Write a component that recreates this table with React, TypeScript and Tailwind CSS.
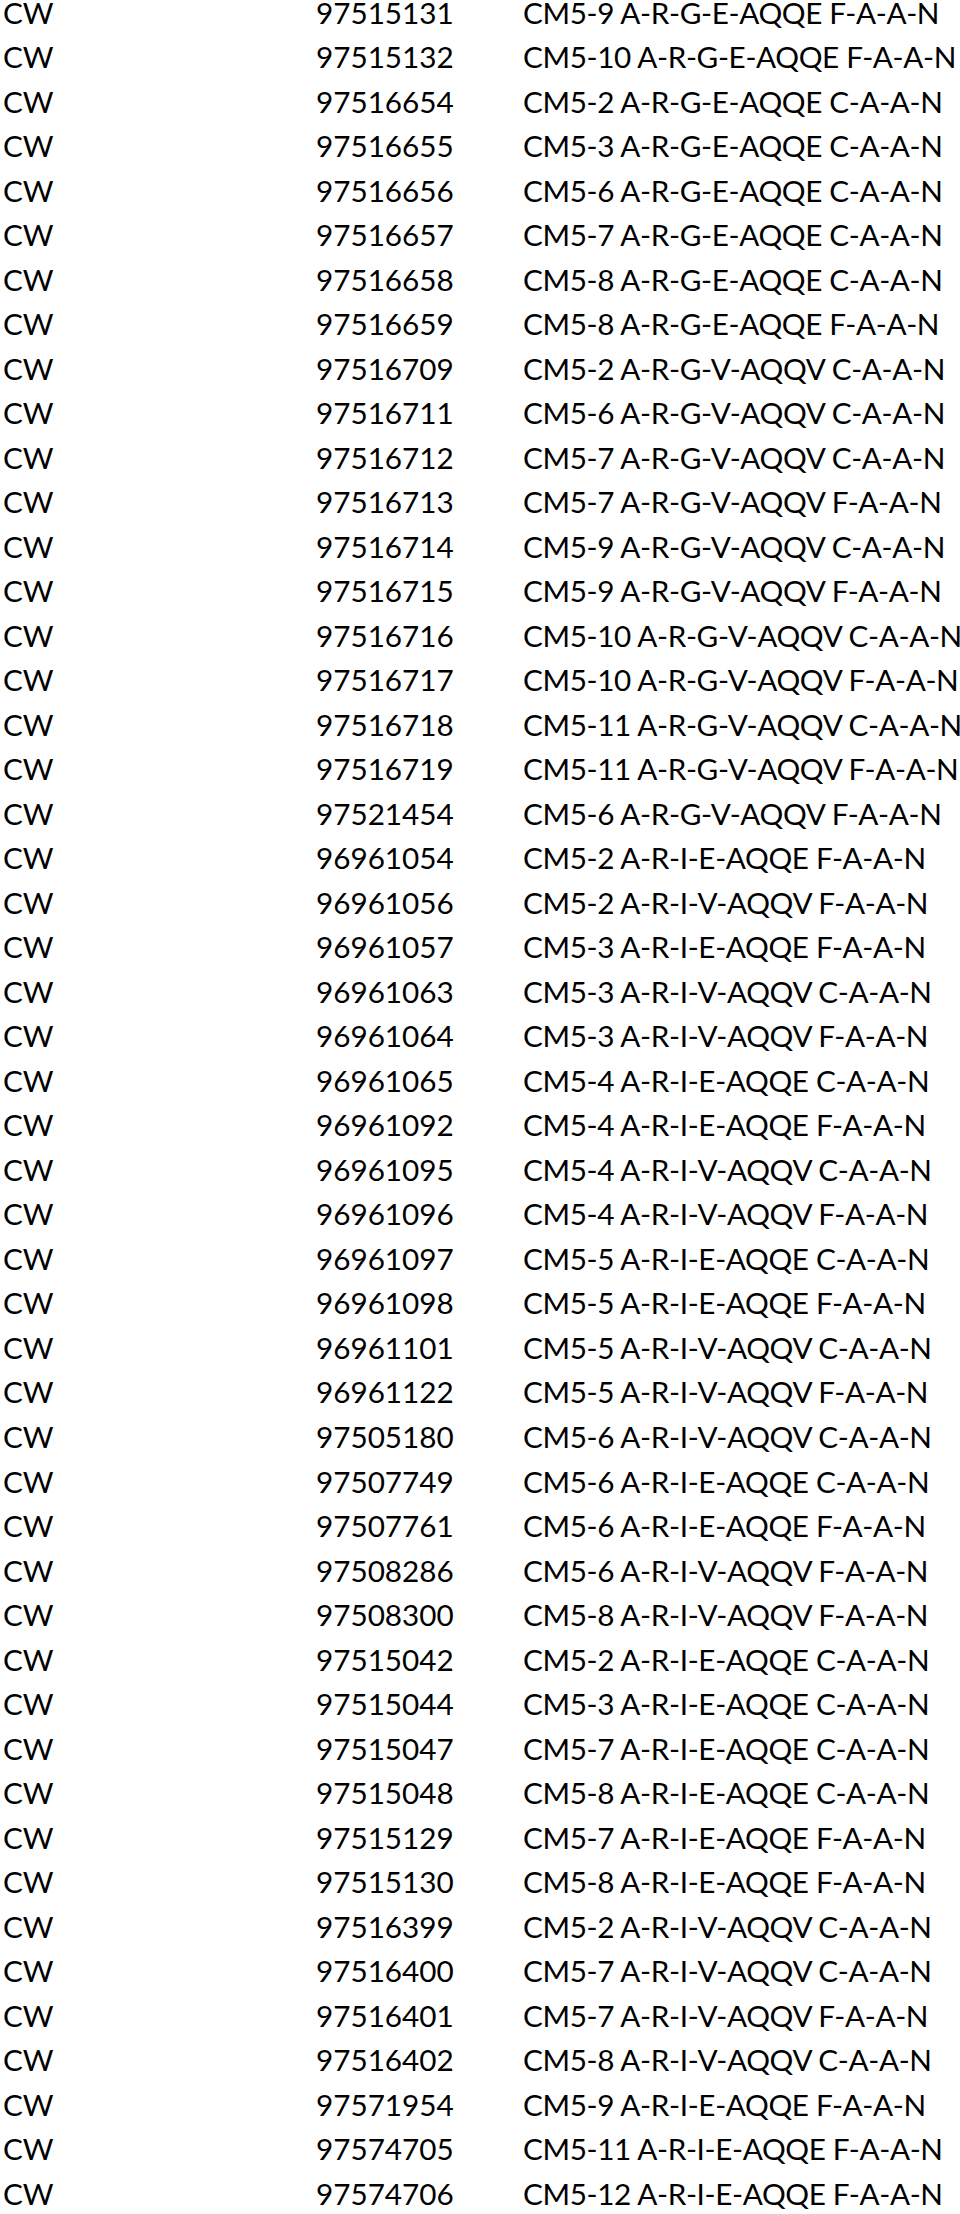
import React from "react";

const rows: [string, string][] = [
  ["97515131", "CM5-9 A-R-G-E-AQQE F-A-A-N"],
  ["97515132", "CM5-10 A-R-G-E-AQQE F-A-A-N"],
  ["97516654", "CM5-2 A-R-G-E-AQQE C-A-A-N"],
  ["97516655", "CM5-3 A-R-G-E-AQQE C-A-A-N"],
  ["97516656", "CM5-6 A-R-G-E-AQQE C-A-A-N"],
  ["97516657", "CM5-7 A-R-G-E-AQQE C-A-A-N"],
  ["97516658", "CM5-8 A-R-G-E-AQQE C-A-A-N"],
  ["97516659", "CM5-8 A-R-G-E-AQQE F-A-A-N"],
  ["97516709", "CM5-2 A-R-G-V-AQQV C-A-A-N"],
  ["97516711", "CM5-6 A-R-G-V-AQQV C-A-A-N"],
  ["97516712", "CM5-7 A-R-G-V-AQQV C-A-A-N"],
  ["97516713", "CM5-7 A-R-G-V-AQQV F-A-A-N"],
  ["97516714", "CM5-9 A-R-G-V-AQQV C-A-A-N"],
  ["97516715", "CM5-9 A-R-G-V-AQQV F-A-A-N"],
  ["97516716", "CM5-10 A-R-G-V-AQQV C-A-A-N"],
  ["97516717", "CM5-10 A-R-G-V-AQQV F-A-A-N"],
  ["97516718", "CM5-11 A-R-G-V-AQQV C-A-A-N"],
  ["97516719", "CM5-11 A-R-G-V-AQQV F-A-A-N"],
  ["97521454", "CM5-6 A-R-G-V-AQQV F-A-A-N"],
  ["96961054", "CM5-2 A-R-I-E-AQQE F-A-A-N"],
  ["96961056", "CM5-2 A-R-I-V-AQQV F-A-A-N"],
  ["96961057", "CM5-3 A-R-I-E-AQQE F-A-A-N"],
  ["96961063", "CM5-3 A-R-I-V-AQQV C-A-A-N"],
  ["96961064", "CM5-3 A-R-I-V-AQQV F-A-A-N"],
  ["96961065", "CM5-4 A-R-I-E-AQQE C-A-A-N"],
  ["96961092", "CM5-4 A-R-I-E-AQQE F-A-A-N"],
  ["96961095", "CM5-4 A-R-I-V-AQQV C-A-A-N"],
  ["96961096", "CM5-4 A-R-I-V-AQQV F-A-A-N"],
  ["96961097", "CM5-5 A-R-I-E-AQQE C-A-A-N"],
  ["96961098", "CM5-5 A-R-I-E-AQQE F-A-A-N"],
  ["96961101", "CM5-5 A-R-I-V-AQQV C-A-A-N"],
  ["96961122", "CM5-5 A-R-I-V-AQQV F-A-A-N"],
  ["97505180", "CM5-6 A-R-I-V-AQQV C-A-A-N"],
  ["97507749", "CM5-6 A-R-I-E-AQQE C-A-A-N"],
  ["97507761", "CM5-6 A-R-I-E-AQQE F-A-A-N"],
  ["97508286", "CM5-6 A-R-I-V-AQQV F-A-A-N"],
  ["97508300", "CM5-8 A-R-I-V-AQQV F-A-A-N"],
  ["97515042", "CM5-2 A-R-I-E-AQQE C-A-A-N"],
  ["97515044", "CM5-3 A-R-I-E-AQQE C-A-A-N"],
  ["97515047", "CM5-7 A-R-I-E-AQQE C-A-A-N"],
  ["97515048", "CM5-8 A-R-I-E-AQQE C-A-A-N"],
  ["97515129", "CM5-7 A-R-I-E-AQQE F-A-A-N"],
  ["97515130", "CM5-8 A-R-I-E-AQQE F-A-A-N"],
  ["97516399", "CM5-2 A-R-I-V-AQQV C-A-A-N"],
  ["97516400", "CM5-7 A-R-I-V-AQQV C-A-A-N"],
  ["97516401", "CM5-7 A-R-I-V-AQQV F-A-A-N"],
  ["97516402", "CM5-8 A-R-I-V-AQQV C-A-A-N"],
  ["97571954", "CM5-9 A-R-I-E-AQQE F-A-A-N"],
  ["97574705", "CM5-11 A-R-I-E-AQQE F-A-A-N"],
  ["97574706", "CM5-12 A-R-I-E-AQQE F-A-A-N"],
];

export default function App() {
  return (
    <div className="h-[2214px] w-[960px] overflow-hidden bg-white text-black font-['Lato',sans-serif] text-[29.7px]">
      {/* spreadsheet-like listing: code / number / description */}
      <div className="pl-[3px]">
        {rows.map(([num, code], i) => (
          <div key={i} className="grid h-[44.53px] grid-cols-[313px_207px_1fr] items-start pt-[2.5px] whitespace-nowrap leading-[20px]">
            <span>CW</span>
            <span>{num}</span>
            <span className="tracking-[-0.35px]">{code}</span>
          </div>
        ))}
      </div>
    </div>
  );
}
